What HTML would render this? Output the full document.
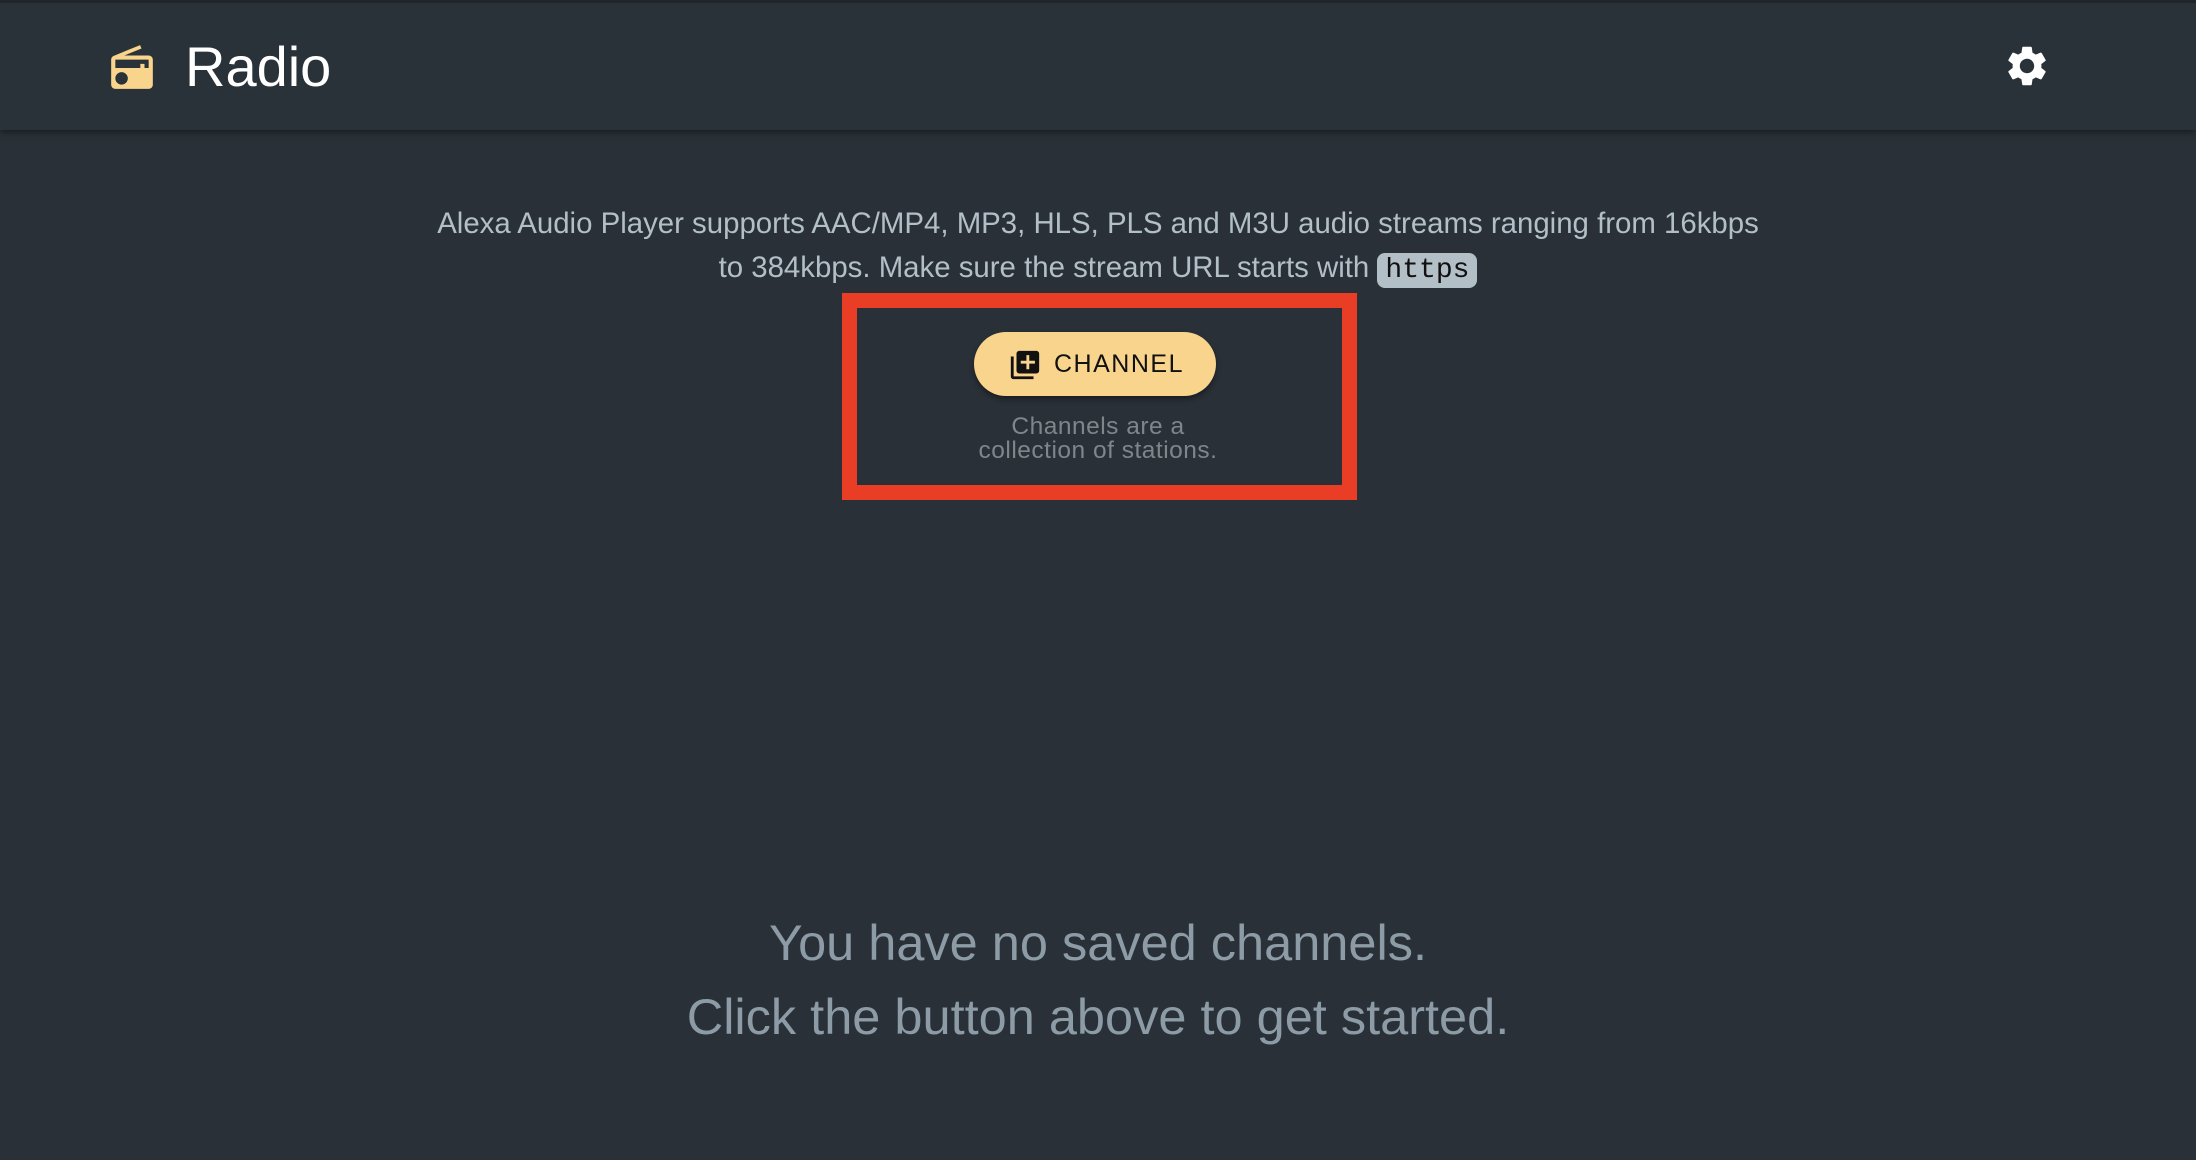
<!DOCTYPE html>
<html><head><meta charset="utf-8"><style>
html,body{margin:0;padding:0;}
body{width:2196px;height:1160px;background:#293037;font-family:"Liberation Sans",sans-serif;position:relative;overflow:hidden;}
.hdr{position:absolute;left:0;top:0;width:2196px;height:130px;background:#2a3239;border-top:3px solid #1f2529;box-sizing:border-box;box-shadow:0 2px 6px rgba(0,0,0,0.45);}
.title{position:absolute;left:185px;top:31px;font-size:56px;font-weight:300;color:#fff;}
.desc{position:absolute;left:0;width:2196px;top:202px;text-align:center;font-size:29.4px;line-height:44px;color:#b3bfc7;}
code{font-family:"Liberation Mono",monospace;background:#b3bfc7;color:#111;border-radius:8px;padding:2px 8px;font-size:28px;}
.box{position:absolute;left:842px;top:293px;width:515px;height:207px;border:15px solid #e93e25;box-sizing:border-box;}
.btn{position:absolute;left:974px;top:332px;width:242px;height:64px;border-radius:32px;background:#f8d48d;box-shadow:0 3px 6px rgba(0,0,0,0.4);}
.btn span{position:absolute;left:80px;top:18px;font-size:25px;letter-spacing:1.5px;color:#111;}
.sub{position:absolute;left:0;width:2196px;top:415px;text-align:center;font-size:24.5px;line-height:24px;color:#7f868b;letter-spacing:0.5px;}
.empty{position:absolute;left:0;width:2196px;top:906px;text-align:center;font-size:50.5px;line-height:74px;color:#8c9ba5;}
</style></head><body>
<div class="hdr">
<svg style="position:absolute;left:107px;top:40px" width="50" height="50" viewBox="0 0 24 24"><path fill="#f8d48d" d="M3.24 6.15C2.51 6.43 2 7.170 2 8v12c0 1.1.89 2 2 2h16c1.11 0 2-.9 2-2V8c0-1.11-.89-2-2-2H8.3l8.26-3.34L15.88 1 3.24 6.15zM7 20c-1.66 0-3-1.34-3-3s1.34-3 3-3 3 1.34 3 3-1.34 3-3 3zm13-8h-2v-2h-2v2H4V8h16v4z"/></svg>
<div class="title">Radio</div>
<svg style="position:absolute;left:2003px;top:39px" width="48" height="48" viewBox="0 0 24 24"><path fill="#fff" d="M19.14 12.94c.04-.3.06-.61.06-.94 0-.32-.02-.64-.07-.94l2.03-1.58a.49.49 0 0 0 .12-.61l-1.920-3.32a.488.488 0 0 0-.59-.22l-2.39.96c-.5-.38-1.03-.7-1.62-.94l-.36-2.54a.484.484 0 0 0-.48-.41h-3.84c-.24 0-.43.17-.47.41l-.36 2.54c-.59.24-1.13.57-1.62.94l-2.39-.96c-.22-.08-.47 0-.59.22L2.74 8.87c-.12.21-.08.47.12.61l2.03 1.58c-.05.3-.09.63-.09.94s.02.64.07.94l-2.03 1.58a.49.49 0 0 0-.12.61l1.92 3.32c.12.22.37.29.59.22l2.39-.96c.5.38 1.03.7 1.62.94l.36 2.54c.05.24.24.41.48.41h3.84c.24 0 .44-.17.47-.41l.36-2.54c.59-.24 1.13-.56 1.62-.94l2.39.96c.22.08.47 0 .59-.22l1.92-3.32c.12-.22.07-.47-.12-.61l-2.01-1.58zM12 15.6c-1.98 0-3.6-1.62-3.6-3.6s1.62-3.6 3.6-3.6 3.6 1.62 3.6 3.6-1.62 3.6-3.6 3.6z"/></svg>
</div>
<div class="desc">Alexa Audio Player supports AAC/MP4, MP3, HLS, PLS and M3U audio streams ranging from 16kbps<br>to 384kbps. Make sure the stream URL starts with <code>https</code></div>
<div class="box"></div>
<div class="btn">
<svg style="position:absolute;left:34px;top:16px" width="34" height="34" viewBox="0 0 24 24"><path fill="#111" d="M4 6H2v14c0 1.1.9 2 2 2h14v-2H4V6zm16-4H8c-1.1 0-2 .9-2 2v12c0 1.1.9 2 2 2h12c1.1 0 2-.9 2-2V4c0-1.1-.9-2-2-2zm-1 9h-4v4h-2v-4H9V9h4V5h2v4h4v2z"/></svg>
<span>CHANNEL</span></div>
<div class="sub">Channels are a<br>collection of stations.</div>
<div class="empty">You have no saved channels.<br>Click the button above to get started.</div>
</body></html>
